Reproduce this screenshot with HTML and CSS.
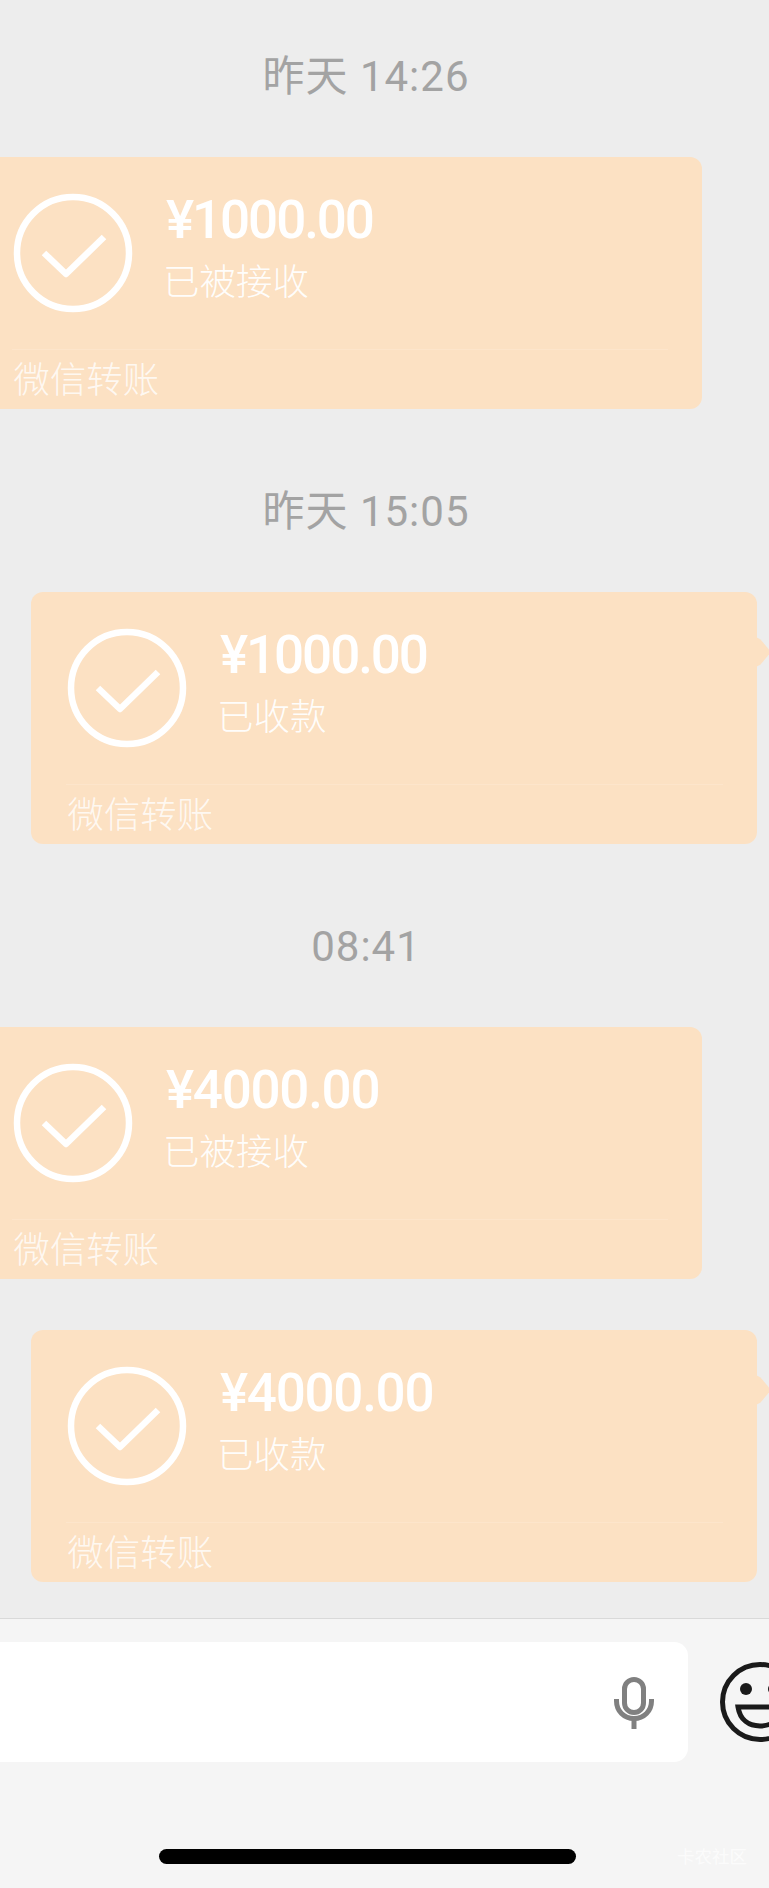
FILE: index.html
```html
<!DOCTYPE html>
<html lang="zh">
<head>
<meta charset="utf-8">
<title>微信转账</title>
<link rel="stylesheet" href="styles.css">
</head>
<body>
<main class="chat">
  <div class="time">昨天 14:26</div>
  <article class="card incoming">
    <div class="card-main">
      <svg class="check" viewBox="0 0 122 122"><circle cx="61" cy="61" r="56" /><path d="M32 61 L54 82 L92 45" /></svg>
      <div class="card-text"><div class="amount">¥1000.00</div><div class="status">已被接收</div></div>
    </div>
    <div class="card-foot">微信转账</div>
  </article>
  <div class="time">昨天 15:05</div>
  <article class="card outgoing">
    <div class="card-main">
      <svg class="check" viewBox="0 0 122 122"><circle cx="61" cy="61" r="56" /><path d="M32 61 L54 82 L92 45" /></svg>
      <div class="card-text"><div class="amount">¥1000.00</div><div class="status">已收款</div></div>
    </div>
    <div class="card-foot">微信转账</div>
  </article>
  <div class="time">08:41</div>
  <article class="card incoming">
    <div class="card-main">
      <svg class="check" viewBox="0 0 122 122"><circle cx="61" cy="61" r="56" /><path d="M32 61 L54 82 L92 45" /></svg>
      <div class="card-text"><div class="amount wide">¥4000.00</div><div class="status">已被接收</div></div>
    </div>
    <div class="card-foot">微信转账</div>
  </article>
  <article class="card outgoing next">
    <div class="card-main">
      <svg class="check" viewBox="0 0 122 122"><circle cx="61" cy="61" r="56" /><path d="M32 61 L54 82 L92 45" /></svg>
      <div class="card-text"><div class="amount wide">¥4000.00</div><div class="status">已收款</div></div>
    </div>
    <div class="card-foot">微信转账</div>
  </article>
</main>
<footer class="bar">
  <div class="bar-row">
    <div class="input">
      <svg class="mic" viewBox="0 0 40 52"><rect x="10.5" y="2.5" width="19" height="33" rx="9.5" /><path d="M2.5 22 V24 C2.5 34 10 41.5 20 41.5 C30 41.5 37.5 34 37.5 24 V22" /><path d="M20 41.5 V52" /></svg>
    </div>
    <svg class="smile" viewBox="0 0 80 80"><circle cx="40" cy="40" r="37.5" /><circle class="eye" cx="26" cy="27" r="6" /><circle class="eye" cx="54" cy="27" r="6" /><path d="M18 45 H62 C60 58 51 64 40 64 C29 64 20 58 18 45 Z" /></svg>
  </div>
  <div class="home"></div>
  <div class="mark">卡农社区</div>
</footer>
</body>
</html>
```
FILE: styles.css
```css
* { box-sizing: border-box; }
html, body { margin: 0; padding: 0; }
body {
  position: relative;
  width: 769px;
  height: 1888px;
  overflow: hidden;
  background: #ededed;
  font-family: Roboto, "Noto Sans CJK SC", sans-serif;
}
.chat { height: 1618px; padding-top: 52px; overflow: hidden; }
.time {
  height: 48px;
  line-height: 50px;
  margin-right: 37px;
  text-align: center;
  font-size: 42px;
  color: #a3a3a3;
  letter-spacing: 1px;
}
.card {
  position: relative;
  width: 726px;
  height: 252px;
  margin: 57px 0 78px;
  padding: 35px 0 0 36px;
  background: #fce1c3;
  border-radius: 12px;
  color: #fff;
  display: flex;
  flex-direction: column;
}
.incoming { margin-left: -24px; }
.outgoing { margin-left: 31px; padding-left: 35px; }
.next { margin-top: -27px; margin-bottom: 0; }
.outgoing::after {
  content: "";
  position: absolute;
  left: 100%;
  top: 45px;
  margin-left: -1px;
  width: 15px;
  height: 30px;
  background: #fce1c3;
  clip-path: polygon(0 0, 30% 8%, 100% 50%, 30% 92%, 0 100%);
}
.card-main { display: flex; gap: 32px; height: 157px; }
.check { width: 122px; height: 122px; flex: none; }
.check circle, .check path { fill: none; stroke: #fff; stroke-width: 6.5; }
.check path { stroke-linejoin: round; }
.card-text { padding-top: 1px; }
.amount {
  font-size: 53px;
  font-weight: 500;
  line-height: 54px;
  letter-spacing: -2.1px;
}
.amount.wide { letter-spacing: -1.3px; }
.status {
  margin: 13px 0 0 -3px;
  font-size: 36.5px;
  line-height: 46px;
  font-weight: 300;
  color: rgba(255,255,255,.95);
}
.card-foot {
  margin-right: 34px;
  padding: 8px 0 0 1.5px;
  border-top: 1px solid #fde5cb;
  font-size: 36.4px;
  line-height: 46px;
  font-weight: 300;
  color: rgba(255,255,255,.8);
}
.bar {
  height: 270px;
  background: #f5f5f5;
  border-top: 1px solid #d9d9d9;
  padding-top: 23px;
}
.bar-row { display: flex; gap: 32px; margin-left: -20px; width: 840px; }
.input {
  width: 708px;
  height: 120px;
  background: #fff;
  border-radius: 14px;
  display: flex;
  justify-content: flex-end;
  align-items: center;
  padding: 2px 34px 0 0;
}
.mic { width: 40px; height: 52px; }
.mic rect, .mic path { fill: none; stroke: #808080; stroke-width: 5; }
.smile { width: 80px; height: 80px; flex: none; align-self: center; }
.smile circle, .smile path { fill: none; stroke: #1a1a1a; stroke-width: 5; }
.smile .eye { fill: #1a1a1a; stroke: none; }
.home {
  width: 417px;
  height: 15px;
  margin: 87px 0 0 159px;
  background: #000;
  border-radius: 8px;
}
.mark {
  position: absolute;
  left: 677px;
  top: 1846px;
  font-size: 17.5px;
  line-height: 22px;
  color: rgba(255,255,255,.7);
}
```
